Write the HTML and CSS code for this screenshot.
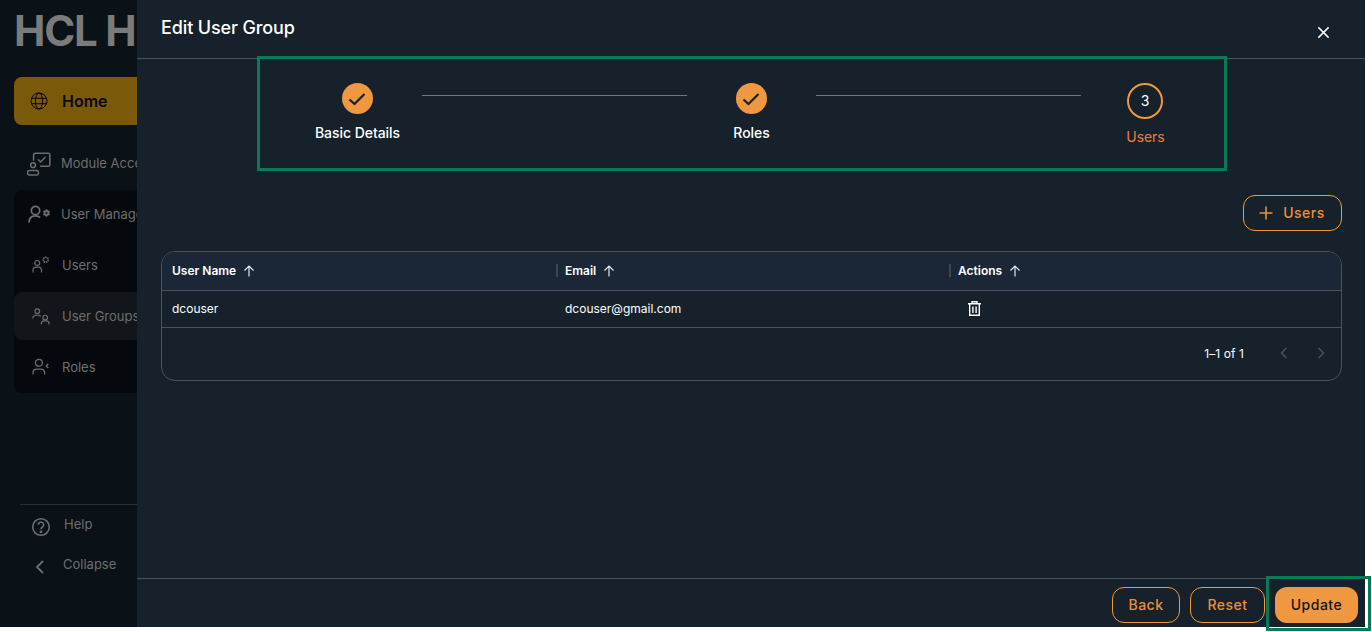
FILE: index.html
```html
<!DOCTYPE html>
<html lang="en">
<head>
<meta charset="utf-8">
<title>Edit User Group</title>
<link rel="stylesheet" href="styles.css">
</head>
<body>
<div class="app">
  <aside class="sidebar">
    <div class="logo">HCL H</div>
    <a class="home">
      <svg class="home-icon" viewBox="0 0 18 18" fill="none" stroke="#0a0a0a" stroke-width="1"><circle cx="9" cy="9" r="8"/><ellipse cx="9" cy="9" rx="3.600" ry="8"/><path d="M1.400 6.300h15.200M1.400 11.700h15.200"/></svg>
      <span>Home</span>
    </a>
    <div class="nav-row nav-top">
      <svg class="nav-icon big" viewBox="0 0 24 24" fill="none" stroke="#6e6e6e" stroke-width="1.400"><path d="M7 10V4.500A1.500 1.500 0 0 1 8.500 3h12A1.500 1.500 0 0 1 22 4.500v9a1.500 1.500 0 0 1-1.500 1.500H13"/><path d="M11 8.500l2.500 2.500 4.500-4.500"/><circle cx="6.500" cy="14" r="2.200"/><rect x="1.500" y="19" width="10" height="4" rx="1.500"/></svg>
      <span>Module Access</span>
    </div>
    <div class="nav-group">
      <div class="nav-row head">
        <svg class="nav-icon" viewBox="0 0 22 18" fill="none" stroke="#6e6e6e" stroke-width="1.700"><circle cx="7.500" cy="5.500" r="4.200"/><path d="M1 17.500c0-4.200 2.500-6.700 6.500-6.700 2 0 3.500.6 4.500 1.800"/><path d="M18.500 4.300v7.400M15.300 6.150l6.400 3.700M15.300 9.850l6.400-3.700" stroke-width="1.500"/><circle cx="18.500" cy="8" r="2.900" fill="#6e6e6e" stroke="none"/><circle cx="18.500" cy="8" r="1" fill="#05090e" stroke="none"/></svg>
        <span>User Management</span>
      </div>
      <div class="nav-row sub users">
        <svg class="nav-icon small" viewBox="0 0 18 16" fill="none" stroke="#6e6e6e" stroke-width="1.100"><circle cx="5" cy="6.500" r="2.300"/><path d="M1 15.500V13a3 3 0 0 1 3-2.500h2A3 3 0 0 1 9 13v2.500"/><circle cx="13" cy="3.500" r="2.400" stroke-dasharray="1.500 .6" stroke-width="1.500"/></svg>
        <span>Users</span>
      </div>
      <div class="nav-row sub active">
        <svg class="nav-icon small" viewBox="0 0 18 16" fill="none" stroke="#6e6e6e" stroke-width="1.100"><circle cx="5" cy="3" r="2.200"/><path d="M.8 10c0-2 1.500-3.200 3.200-3.200h2c1 0 1.800.4 2.300 1"/><circle cx="12.500" cy="9" r="2.200"/><path d="M8.800 15.500V15c0-1.600 1.200-2.800 2.700-2.800h2c1.600 0 2.700 1.200 2.700 2.800v.5"/></svg>
        <span>User Groups</span>
      </div>
      <div class="nav-row sub roles">
        <svg class="nav-icon small" viewBox="0 0 18 16" fill="none" stroke="#6e6e6e" stroke-width="1.200"><circle cx="6.500" cy="4.500" r="3.300"/><path d="M1 15.500V13.500a3.500 3.500 0 0 1 3.500-3h4a3.500 3.500 0 0 1 3.500 3v2"/><path d="M15.500 5.500l-2 2 2 2"/></svg>
        <span>Roles</span>
      </div>
    </div>
    <div class="side-foot">
      <div class="foot-row help">
        <svg class="foot-icon" viewBox="0 0 20 20" fill="none" stroke="#6e6e6e" stroke-width="1.600"><circle cx="10" cy="10" r="8.300"/><path d="M7.300 7.800a2.700 2.700 0 1 1 4.200 2.200c-1 .7-1.500 1.200-1.500 2.200"/><circle cx="10" cy="14.800" r=".6" fill="#6e6e6e"/></svg>
        <span>Help</span>
      </div>
      <div class="foot-row collapse">
        <svg class="foot-icon" viewBox="0 0 20 20" fill="none" stroke="#6e6e6e" stroke-width="1.800"><path d="M13 4l-6 6 6 6"/></svg>
        <span>Collapse</span>
      </div>
    </div>
  </aside>

  <main class="drawer">
    <header class="drawer-head">
      <h1>Edit User Group</h1>
      <svg class="close" viewBox="0 0 14 14" fill="none" stroke="#fff" stroke-width="1.600"><path d="M1.500 1.500l11 11M12.500 1.500l-11 11"/></svg>
    </header>
    <div class="drawer-body">
      <div class="stepper">
        <div class="step">
          <div class="dot done"><svg viewBox="0 0 18 14" fill="none" stroke="#16212c" stroke-width="2.200"><path d="M1.500 7.500l5 4.500 10-10"/></svg></div>
          <div class="step-label">Basic Details</div>
        </div>
        <div class="connector"></div>
        <div class="step">
          <div class="dot done"><svg viewBox="0 0 18 14" fill="none" stroke="#16212c" stroke-width="2.200"><path d="M1.500 7.500l5 4.500 10-10"/></svg></div>
          <div class="step-label">Roles</div>
        </div>
        <div class="connector"></div>
        <div class="step current">
          <div class="dot ring">3</div>
          <div class="step-label">Users</div>
        </div>
      </div>
      <div class="toolbar">
        <button class="btn add">
          <svg viewBox="0 0 14 14" fill="none" stroke="#e8903a" stroke-width="1.600"><path d="M7 .5v13M.5 7h13"/></svg>
          <span>Users</span>
        </button>
      </div>
      <section class="table">
        <div class="t-row t-head">
          <div class="cell first"><span>User Name</span><svg class="sort" viewBox="0 0 12 12" fill="none" stroke="#e4e7ea" stroke-width="1.200"><path d="M6 11.500V1M1.500 5.500L6 1l4.500 4.500"/></svg></div>
          <div class="cell"><i class="sep"></i><span>Email</span><svg class="sort" viewBox="0 0 12 12" fill="none" stroke="#e4e7ea" stroke-width="1.200"><path d="M6 11.500V1M1.500 5.500L6 1l4.500 4.500"/></svg></div>
          <div class="cell"><i class="sep"></i><span>Actions</span><svg class="sort" viewBox="0 0 12 12" fill="none" stroke="#e4e7ea" stroke-width="1.200"><path d="M6 11.500V1M1.500 5.500L6 1l4.500 4.500"/></svg></div>
        </div>
        <div class="t-row t-data">
          <div class="cell first">dcouser</div>
          <div class="cell pad">dcouser@gmail.com</div>
          <div class="cell pad">
            <svg class="trash" viewBox="0 0 13 15" fill="none" stroke="#fff" stroke-width="1.400"><path d="M0 2.800h13M4 2.500V.7h5v1.800M1.700 3v11.300h9.600V3M4.900 5.500v6.500M8.100 5.500v6.500"/></svg>
          </div>
        </div>
        <div class="t-foot">
          <span>1–1 of 1</span>
          <svg class="pager first-pager" viewBox="0 0 8 12" fill="none" stroke="#4a525a" stroke-width="1.500"><path d="M6.500 1l-5 5 5 5"/></svg>
          <svg class="pager" viewBox="0 0 8 12" fill="none" stroke="#4a525a" stroke-width="1.500"><path d="M1.500 1l5 5-5 5"/></svg>
        </div>
      </section>
    </div>
    <footer class="drawer-foot">
      <button class="btn back">Back</button>
      <button class="btn reset">Reset</button>
      <button class="btn update">Update</button>
    </footer>
  </main>
</div>
<div class="mark mark-stepper"></div>
<div class="mark mark-update"></div>
</body>
</html>
```
FILE: styles.css
```css
* { box-sizing: border-box; }
html, body { margin: 0; padding: 0; background: #fff; }
body { width: 1372px; height: 632px; overflow: hidden; position: relative; font-family: Inter, "Liberation Sans", sans-serif; }
.app { display: flex; width: 1365px; height: 627px; }

.sidebar { width: 137px; flex: none; background: #0a1117; overflow: hidden; display: flex; flex-direction: column; padding-left: 14px; }
.logo { height: 77px; font-size: 42px; line-height: 62px; font-weight: 700; color: #7b7b7b; white-space: nowrap; letter-spacing: -1.200px; }
.home { width: 160px; height: 48px; flex: none; background: #7a5a0a; border-radius: 8px; display: flex; align-items: center; padding-left: 16px; gap: 14px; font-size: 16px; font-weight: 600; color: #0a0a0a; }
.home-icon { width: 18px; height: 18px; }
.nav-row { height: 51px; width: 180px; display: flex; align-items: center; font-size: 13px; color: #6e6e6e; white-space: nowrap; }
.nav-top { margin-top: 13px; padding: 0 0 1px 12px; gap: 9px; }
.nav-group { width: 180px; height: 203px; flex: none; margin-top: 1px; background: #05090e; border-radius: 8px; }
.nav-group .nav-row { padding-left: 14px; gap: 11px; }
.nav-group .nav-row.head { height: 48px; }
.nav-group .nav-row.users { height: 53px; }
.nav-group .nav-row.sub { padding-left: 18px; gap: 11px; }
.nav-group .nav-row.roles { padding-bottom: 2px; }
.nav-row.active { background: #12151a; border-radius: 8px; height: 48px; margin: 1px 0 2px; }
.nav-icon { width: 22px; height: 18px; flex: none; }
.nav-icon.big { width: 26px; height: 26px; }
.nav-icon.small { width: 19px; height: 17px; }
.side-foot { margin-top: auto; margin-left: 6px; width: 120px; border-top: 1px solid #2b2f33; height: 123px; padding-top: 9px; color: #6e6e6e; font-size: 13px; }
.foot-row { display: flex; height: 40px; }
.foot-row span { line-height: 20px; }
.foot-icon { width: 20px; height: 20px; margin-top: 3px; }
.help { padding-left: 11px; gap: 13px; }
.collapse { padding-left: 10px; gap: 13px; }

.drawer { flex: 1; min-width: 0; background: #16212c; display: flex; flex-direction: column; }
.drawer-head { height: 59px; flex: none; border-bottom: 1px solid #4a525a; display: flex; justify-content: space-between; padding: 0 35px 0 24px; }
.drawer-head h1 { margin: 0; font-size: 18px; line-height: 22px; padding-top: 17px; font-weight: 500; color: #fff; letter-spacing: -.13px; }
.close { width: 13px; height: 13px; margin-top: 26px; }
.drawer-body { flex: 1; min-height: 0; padding: 24px 23px 0 24px; }

.stepper { width: 917px; height: 112px; margin-left: 131.500px; display: flex; align-items: flex-start; }
.step { width: 129px; flex: none; display: flex; flex-direction: column; align-items: center; gap: 9px; font-size: 14px; line-height: 20px; font-weight: 500; color: #fff; letter-spacing: -.05px; }
.step-label { padding-left: 1px; }
.step.current { color: #e8823a; gap: 8px; font-weight: 400; }
.dot { width: 31px; height: 31px; border-radius: 50%; display: flex; align-items: center; justify-content: center; }
.dot.done { background: #f0983f; }
.dot.done svg { width: 18px; height: 14px; }
.dot.ring { width: 36px; height: 36px; border: 2px solid #f0983f; color: #fff; font-size: 14px; font-weight: 400; }
.connector { flex: 1; height: 1px; margin-top: 12px; background: #70757a; }

.toolbar { display: flex; justify-content: flex-end; height: 56px; }
.btn { font-family: inherit; font-size: 14px; font-weight: 500; letter-spacing: .5px; border-radius: 12px; background: transparent; border: 1px solid #f0983f; color: #e8903a; padding: 0 0 1px; height: 36px; display: flex; align-items: center; justify-content: center; }
.btn.add { width: 99px; gap: 10px; padding: 0 1px 2px 0; }
.btn.add svg { width: 14px; height: 14px; margin-top: 2px; }

.table { border: 1px solid #4a525a; border-radius: 14px; height: 130px; overflow: hidden; color: #fff; font-size: 12px; }
.t-row { display: grid; grid-template-columns: 393px 393px 1fr; border-bottom: 1px solid #4a525a; }
.t-head { height: 39px; background: #1b2737; font-weight: 600; padding-bottom: 1px; }
.t-data { height: 37px; padding-bottom: 2px; }
.cell { display: flex; align-items: center; padding-left: 1px; white-space: pre; }
.cell.first { padding-left: 10px; }
.cell.pad { padding-left: 10px; }
.sep { width: 2px; height: 13px; background: #3e4650; margin-right: 7px; flex: none; }
.sort { width: 12px; height: 12px; margin-left: 7px; }
.trash { width: 13px; height: 15px; margin-left: 10px; margin-top: 1px; }
.t-foot { height: 52px; display: flex; align-items: center; justify-content: flex-end; padding: 0 16px 2px 0; font-size: 12px; font-weight: 400; letter-spacing: .1px; }
.pager { width: 8px; height: 12px; margin-left: 29px; }
.first-pager { margin-left: 36px; }

.drawer-foot { height: 49px; flex: none; border-top: 1px solid #4a525a; display: flex; justify-content: flex-end; gap: 10px; padding: 8px 7px 0 0; }
.back { width: 68px; }
.reset { width: 75px; }
.update { width: 83px; background: #f0983f; border: none; color: #10161d; }

.mark { position: absolute; border: 3px solid #087a55; pointer-events: none; }
.mark-stepper { left: 257px; top: 56px; width: 970px; height: 115px; }
.mark-update { left: 1266px; top: 576px; width: 105px; height: 55px; }
```
